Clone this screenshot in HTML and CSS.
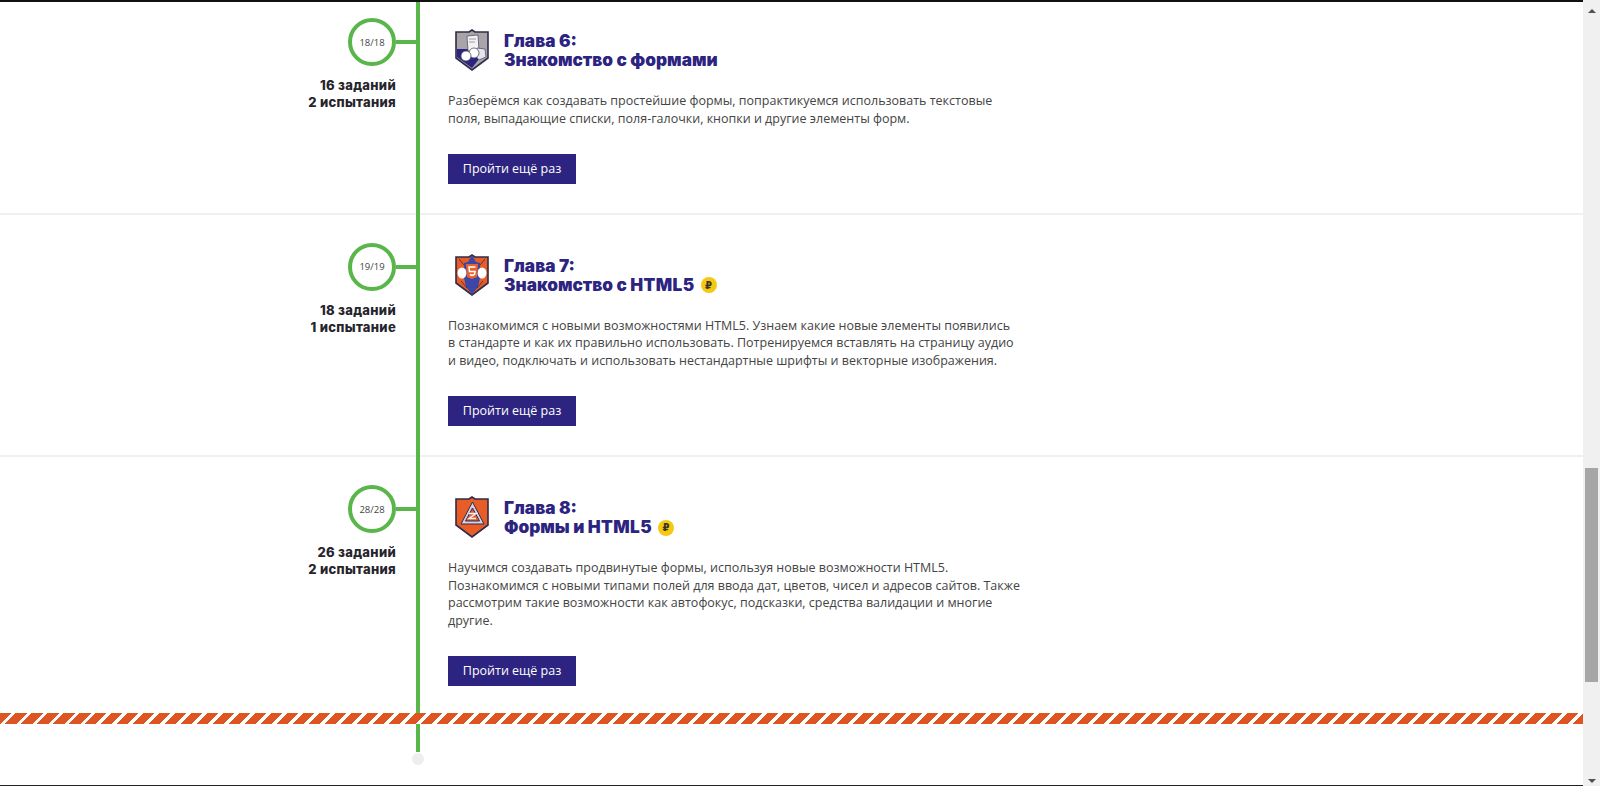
FILE: index.html
```html
<!DOCTYPE html>
<html lang="ru">
<head>
    <meta charset="UTF-8">
    <title>Курс: HTML и CSS</title>
    <link rel="stylesheet" href="styles.css">
</head>
<body>
<div class="page">
    <main class="timeline">
        <div class="spine"></div>

        <section class="chapter chapter-first">
            <div class="chapter-meta">
                <div class="progress">18/18</div>
                <p class="counts">16 заданий<br>2 испытания</p>
            </div>
            <div class="chapter-body">
                <div class="chapter-head">
                    <svg class="badge" viewBox="0 0 34 42">
                        <path d="M1 3H14L17 1L20 3H33V29L17 41L1 29Z" fill="#a9a4a8" stroke="#2f2b4a" stroke-width="1.6"/>
                        <path d="M2 20L14 20L24 30L17 39L2 28Z" fill="#2c2480"/>
                        <path d="M12 7L23 6L24 22H13Z" fill="#f2f2f2" stroke="#55516a" stroke-width=".8"/>
                        <path d="M14 10H21M14 13H20" stroke="#8a8698" stroke-width=".8"/>
                        <path d="M22 19L30 20L31 28L24 31L20 26Z" fill="#e6e4ea" stroke="#55516a" stroke-width=".8"/>
                        <circle cx="19" cy="24" r="5" fill="#fff" stroke="#55516a" stroke-width=".8"/>
                        <circle cx="11" cy="27" r="5" fill="#fff" stroke="#55516a" stroke-width=".8"/>
                    </svg>
                    <h2 class="chapter-title">Глава 6:<br>Знакомство с формами</h2>
                </div>
                <p class="chapter-text">Разберёмся как создавать простейшие формы, попрактикуемся использовать текстовые поля, выпадающие списки, поля-галочки, кнопки и другие элементы форм.</p>
                <a class="btn">Пройти ещё раз</a>
            </div>
        </section>

        <section class="chapter">
            <div class="chapter-meta">
                <div class="progress">19/19</div>
                <p class="counts">18 заданий<br>1 испытание</p>
            </div>
            <div class="chapter-body">
                <div class="chapter-head">
                    <svg class="badge" viewBox="0 0 34 42">
                        <path d="M1 3H14L17 1L20 3H33V29L17 41L1 29Z" fill="#e85c26" stroke="#2f2b4a" stroke-width="1.6"/>
                        <path d="M17 1L21 8L25 9V24L23 33L17 40L11 33L9 24V9L13 8Z" fill="#3a47a8"/>
                        <path d="M4 5L9 11M30 5L25 11M6 27L12 34M28 27L22 34" stroke="#2f2b4a" stroke-width=".8"/>
                        <ellipse cx="7" cy="19" rx="4.500" ry="5.500" fill="#fff"/>
                        <ellipse cx="27" cy="19" rx="4.500" ry="5.500" fill="#fff"/>
                        <path d="M11 10H23L22 23L17 25L12 23Z" fill="#e8622c"/>
                        <path d="M20.500 13H14L14.500 17.500H20L19.500 20.500L17 21.500L14.800 20.500" fill="none" stroke="#fff" stroke-width="1.500"/>
                    </svg>
                    <h2 class="chapter-title">Глава 7:<br>Знакомство с <span class="latin">HTML5</span><span class="paid">₽</span></h2>
                </div>
                <p class="chapter-text">Познакомимся с новыми возможностями HTML5. Узнаем какие новые элементы появились в&nbsp;стандарте и как их правильно использовать. Потренируемся вставлять на страницу аудио и&nbsp;видео, подключать и использовать нестандартные шрифты и векторные изображения.</p>
                <a class="btn">Пройти ещё раз</a>
            </div>
        </section>

        <section class="chapter chapter-last">
            <div class="chapter-meta">
                <div class="progress">28/28</div>
                <p class="counts">26 заданий<br>2 испытания</p>
            </div>
            <div class="chapter-body">
                <div class="chapter-head">
                    <svg class="badge" viewBox="0 0 34 42">
                        <path d="M1 3H14L17 1L20 3H33V29L17 41L1 29Z" fill="#e85c26" stroke="#2f2b4a" stroke-width="1.6"/>
                        <path d="M17.500 6L29 28H6Z" fill="#d8d0e0" stroke="#2f2b4a" stroke-width="1"/>
                        <path d="M17.500 12L24.500 25H10.500Z" fill="#e85c26" stroke="#2f2b4a" stroke-width="1"/>
                        <path d="M14 17.500H21L14 22.500H21" fill="none" stroke="#f4f0f8" stroke-width="1.500"/>
                    </svg>
                    <h2 class="chapter-title">Глава 8:<br>Формы и <span class="latin">HTML5</span><span class="paid">₽</span></h2>
                </div>
                <p class="chapter-text">Научимся создавать продвинутые формы, используя новые возможности HTML5. Познакомимся с новыми типами полей для ввода дат, цветов, чисел и адресов сайтов. Также рассмотрим такие возможности как автофокус, подсказки, средства валидации и многие другие.</p>
                <a class="btn">Пройти ещё раз</a>
            </div>
        </section>

        <div class="hazard"></div>
    </main>

    <aside class="scrollbar">
        <div class="scrollbar-arrow scrollbar-arrow-up"></div>
        <div class="scrollbar-thumb"></div>
        <div class="scrollbar-arrow scrollbar-arrow-down"></div>
    </aside>
</div>
</body>
</html>
```

FILE: styles.css
```css
html, body {
    margin: 0;
    height: 100%;
    overflow: hidden;
}
body {
    font-family: "Open Sans", Arial, sans-serif;
    color: #333;
    background: #fff;
}
.page {
    display: flex;
    height: 786px;
}

/* timeline */
.timeline {
    flex: 1;
    position: relative;
    border-top: 2px solid #111;
    border-bottom: 1px solid #222;
    display: flex;
    flex-direction: column;
}
.spine {
    position: absolute;
    left: 416px;
    top: 0;
    width: 4px;
    height: 750px;
    background: #5ab54b;
}
.spine::after {
    content: "";
    position: absolute;
    left: -4px;
    bottom: -13px;
    width: 12px;
    height: 12px;
    border-radius: 50%;
    background: #eeeeee;
}

.chapter {
    display: flex;
    padding: 28px 0 29px;
    border-bottom: 2px solid #f0f0f0;
}
.chapter-first {
    padding-top: 16px;
}
.chapter-last {
    border-bottom: none;
    padding-bottom: 27px;
}
.chapter-meta {
    width: 396px;
    flex: none;
    display: flex;
    flex-direction: column;
    align-items: flex-end;
}
.progress {
    position: relative;
    box-sizing: border-box;
    width: 48px;
    height: 48px;
    border: 4px solid #5ab54b;
    border-radius: 50%;
    display: flex;
    align-items: center;
    justify-content: center;
    font-size: 9.5px;
    color: #444;
    background: #fff;
}
.progress::after {
    content: "";
    position: absolute;
    left: 44px;
    top: 18px;
    width: 20px;
    height: 4px;
    background: #5ab54b;
}
.counts {
    margin: 11px 0 0;
    text-align: right;
    font-family: Inter, Arial, sans-serif;
    font-weight: 800;
    font-size: 13px;
    letter-spacing: .3px;
    line-height: 17px;
    color: #26242c;
}

.chapter-body {
    margin-left: 52px;
    width: 574px;
}
.chapter-head {
    display: flex;
    align-items: center;
    gap: 15px;
    margin: 11px 0 0 7px;
}
.badge {
    width: 34px;
    height: 42px;
    flex: none;
}
.chapter-title {
    margin: 0;
    font-family: Inter, Arial, sans-serif;
    font-weight: 900;
    font-size: 17.2px;
    line-height: 19px;
    color: #2c2480;
}
.latin {
    letter-spacing: .4px;
}
.paid {
    display: inline-flex;
    align-items: center;
    justify-content: center;
    width: 16px;
    height: 16px;
    margin-left: 6px;
    border-radius: 50%;
    background: #f5c814;
    color: #3a3420;
    font-family: "DejaVu Sans", sans-serif;
    font-size: 10px;
    font-weight: 700;
    vertical-align: 2px;
}
.chapter-text {
    margin: 21px 0 26.6px;
    font-size: 12.5px;
    line-height: 17.6px;
    color: #444;
}
.btn {
    display: block;
    width: 128px;
    height: 30px;
    line-height: 30px;
    text-align: center;
    font-size: 12.5px;
    color: #fff;
    background: #2c2480;
}

.hazard {
    position: relative;
    height: 11px;
    background: repeating-linear-gradient(135deg, #df5522 0, #df5522 7.8px, #fff 7.8px, #fff 11.31px);
}

/* fake window scrollbar */
.scrollbar {
    width: 17px;
    flex: none;
    background: #f0f0f0;
    display: flex;
    flex-direction: column;
    align-items: center;
}
.scrollbar-thumb {
    width: 13px;
    height: 214px;
    margin-top: 455px;
    background: #a6a6a6;
}
.scrollbar-arrow {
    width: 0;
    height: 0;
    border-left: 4px solid transparent;
    border-right: 4px solid transparent;
}
.scrollbar-arrow-up {
    margin-top: 9px;
    border-bottom: 4px solid #505050;
}
.scrollbar-arrow-down {
    margin-top: auto;
    margin-bottom: 3px;
    border-top: 4px solid #505050;
}
```
